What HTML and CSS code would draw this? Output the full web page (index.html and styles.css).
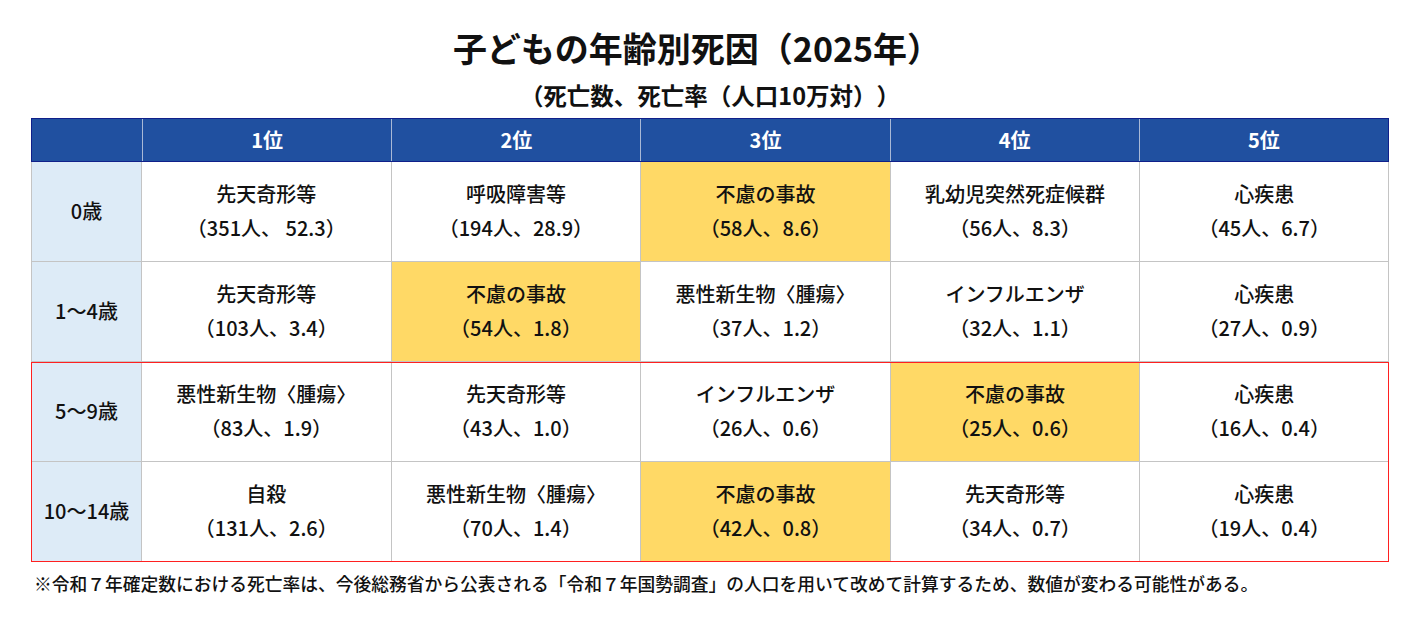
FILE: index.html
```html
<!DOCTYPE html>
<html lang="ja">
<head>
<meta charset="utf-8">
<title>子どもの年齢別死因（2025年）</title>
<link rel="stylesheet" href="styles.css">
</head>
<body>
<div class="page">
  <h1 class="title">子どもの年齢別死因（2025年）</h1>
  <p class="subtitle">（死亡数、死亡率（人口10万対））</p>
  <div class="table">
    <div class="row head">
      <div class="cell hcell"></div>
      <div class="cell hcell">1位</div>
      <div class="cell hcell">2位</div>
      <div class="cell hcell">3位</div>
      <div class="cell hcell">4位</div>
      <div class="cell hcell">5位</div>
    </div>
    <div class="group">
      <div class="row">
        <div class="cell age">0歳</div>
        <div class="cell"><span>先天奇形等</span><span>（351人、 52.3）</span></div>
        <div class="cell"><span>呼吸障害等</span><span>（194人、28.9）</span></div>
        <div class="cell hl"><span>不慮の事故</span><span>（58人、8.6）</span></div>
        <div class="cell"><span>乳幼児突然死症候群</span><span>（56人、8.3）</span></div>
        <div class="cell"><span>心疾患</span><span>（45人、6.7）</span></div>
      </div>
      <div class="row">
        <div class="cell age">1～4歳</div>
        <div class="cell"><span>先天奇形等</span><span>（103人、3.4）</span></div>
        <div class="cell hl"><span>不慮の事故</span><span>（54人、1.8）</span></div>
        <div class="cell"><span>悪性新生物〈腫瘍〉</span><span>（37人、1.2）</span></div>
        <div class="cell"><span>インフルエンザ</span><span>（32人、1.1）</span></div>
        <div class="cell"><span>心疾患</span><span>（27人、0.9）</span></div>
      </div>
    </div>
    <div class="group boxed">
      <div class="row">
        <div class="cell age">5～9歳</div>
        <div class="cell"><span>悪性新生物〈腫瘍〉</span><span>（83人、1.9）</span></div>
        <div class="cell"><span>先天奇形等</span><span>（43人、1.0）</span></div>
        <div class="cell"><span>インフルエンザ</span><span>（26人、0.6）</span></div>
        <div class="cell hl"><span>不慮の事故</span><span>（25人、0.6）</span></div>
        <div class="cell"><span>心疾患</span><span>（16人、0.4）</span></div>
      </div>
      <div class="row">
        <div class="cell age">10～14歳</div>
        <div class="cell"><span>自殺</span><span>（131人、2.6）</span></div>
        <div class="cell"><span>悪性新生物〈腫瘍〉</span><span>（70人、1.4）</span></div>
        <div class="cell hl"><span>不慮の事故</span><span>（42人、0.8）</span></div>
        <div class="cell"><span>先天奇形等</span><span>（34人、0.7）</span></div>
        <div class="cell"><span>心疾患</span><span>（19人、0.4）</span></div>
      </div>
    </div>
  </div>
  <p class="note">※令和７年確定数における死亡率は、今後総務省から公表される「令和７年国勢調査」の人口を用いて改めて計算するため、数値が変わる可能性がある。</p>
</div>
</body>
</html>
```
FILE: styles.css
```css
html, body {
  margin: 0;
  padding: 0;
  background: #ffffff;
}
body {
  font-family: "Noto Sans CJK JP", "Noto Sans", sans-serif;
  color: #111111;
  text-spacing-trim: space-all;
}
.page {
  width: 1358px;
  padding: 0 31px;
}
.title {
  margin: 0;
  padding-top: 25px;
  height: 47px;
  line-height: 45px;
  font-size: 34px;
  font-weight: 700;
  text-align: center;
  padding-right: 26px;
}
.subtitle {
  margin: 0;
  padding-top: 7px;
  height: 39px;
  line-height: 32px;
  font-size: 23.5px;
  font-weight: 700;
  text-align: center;
  padding-right: 0;
}
.table {
  display: flex;
  flex-direction: column;
}
.row {
  display: grid;
  grid-template-columns: 110px repeat(5, 1fr);
  height: 100px;
}
.row.head {
  height: 44px;
  background: #2050a0;
  border: 1px solid #10208a;
  box-sizing: border-box;
}
.cell {
  display: flex;
  flex-direction: column;
  align-items: center;
  justify-content: center;
  font-size: 20px;
  font-weight: 500;
  line-height: 34px;
  border-left: 1px solid #c4c4c4;
  border-bottom: 1px solid #c4c4c4;
  padding-bottom: 2px;
  box-sizing: border-box;
}
.row .cell:last-child {
  border-right: 1px solid #c4c4c4;
}
.head .cell {
  color: #ffffff;
  font-weight: 700;
  border-bottom: none;
  border-left: 1px solid #a9b9d6;
  padding-bottom: 0;
}
.head .cell:first-child {
  border-left: none;
}
.head .cell:last-child {
  border-right: none;
}
.age {
  background: #ddebf7;
  padding-bottom: 2px;
}
.hl {
  background: #ffd966;
}
.group.boxed {
  outline: 1.5px solid #ff2020;
  outline-offset: -1px;
  position: relative;
}
.note {
  margin: 0;
  padding-top: 8px;
  padding-left: 3px;
  font-size: 17.75px;
  font-weight: 500;
  line-height: 26px;
  white-space: nowrap;
}
```
